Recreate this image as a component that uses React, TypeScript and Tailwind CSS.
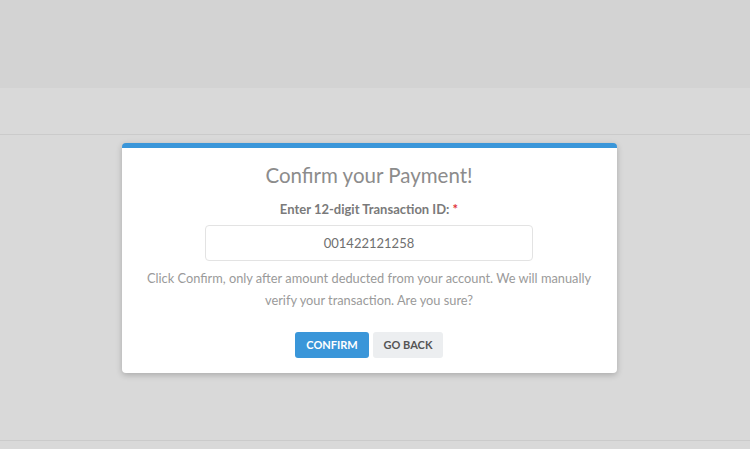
import React, { useState } from "react";

const ConfirmPayment = () => {
    const [txnId, setTxnId] = useState("001422121258");

    return (
        <div className="w-[495px] bg-white rounded-[4px] border-t-[5px] border-[#3a96d9] shadow-[0_2px_6px_rgba(0,0,0,0.22)] px-5 pt-[13px] pb-[15px] text-center">
            <h2 className="text-[20.5px] leading-[28px] text-[#8c8c8c]">
                Confirm your Payment!
            </h2>
            <label className="block mt-[10px] text-[13px] leading-[20px] font-bold text-[#7a7a7a]">
                Enter 12-digit Transaction ID: <span className="text-[#e0343a]">*</span>
            </label>
            <input
                value={txnId}
                onChange={(e) => setTxnId(e.target.value)}
                className="block mx-auto mt-[6px] w-[328px] h-[36px] rounded-[4px] border border-[#e3e3e3] text-center text-[13px] text-[#6f6f6f] outline-none"
            />
            <p className="mt-[6px] text-[12.8px] leading-[22px] text-[#9a9a9a]">
                Click Confirm, only after amount deducted from your account. We will manually
                verify your transaction. Are you sure?
            </p>
            <div className="mt-[21px] flex justify-center gap-[4px]">
                <button className="h-[26px] w-[74px] rounded-[3px] bg-[#3a96d9] text-white text-[11px] font-bold">
                    CONFIRM
                </button>
                <button className="h-[26px] w-[70px] rounded-[3px] bg-[#eceef0] text-[#555] text-[11px] font-bold">
                    GO BACK
                </button>
            </div>
        </div>
    );
};

export default function App() {
    return (
        <div className="w-[750px] h-[449px] bg-[#d9d9d9] overflow-hidden font-['Lato','Liberation_Sans',sans-serif]">
            <div className="h-[88px] bg-[#d3d3d3]" />
            <div className="h-[47px] border-b border-[#cbcbcb]" />
            <div className="h-[306px] border-b border-[#cbcbcb] pt-[8px] pr-[12px] flex justify-center items-start">
                <ConfirmPayment />
            </div>
        </div>
    );
}
